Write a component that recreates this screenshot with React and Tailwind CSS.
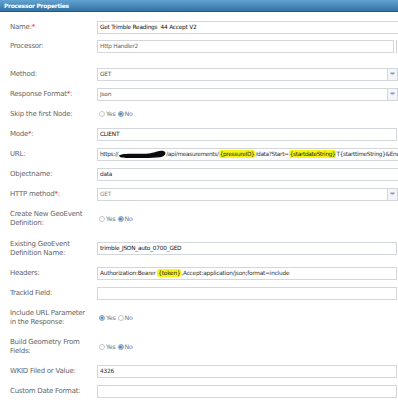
import React from 'react';

const font = { fontFamily: '"DejaVu Sans", Verdana, sans-serif' };

function Label({ children }) {
  return (
    <div className="w-[97px] shrink-0 pl-[10px] text-[7px] leading-[9px] tracking-[-0.25px] text-[#666]">
      {children}
    </div>
  );
}

function Req() {
  return <span className="text-[#e0242a]">*</span>;
}

function Field({ children, wide, dark, muted, edge, tight }) {
  return (
    <div className="flex items-center">
      <div
        className={`h-[13px] border border-[#d3d6db] bg-white flex items-center px-[2px] text-[5.8px] whitespace-nowrap overflow-hidden ${
          tight ? 'tracking-[-0.32px]' : 'tracking-[-0.22px]'
        } ${wide ? 'w-[306px]' : edge ? 'w-[297px]' : 'w-[300px]'} ${
          dark ? 'text-[#111]' : muted ? 'text-[#666]' : 'text-[#333]'
        }`}
      >
        {children}
      </div>
      {edge && <div className="ml-[2px] w-px h-[13px] bg-[#cfd2d6]" />}
    </div>
  );
}

function Select({ value, light }) {
  return (
    <div className="h-[13px] w-[301px] border border-[#d3d6db] bg-white flex items-center">
      <div className={`flex-1 px-[2px] text-[5.8px] tracking-[-0.2px] ${light ? 'text-[#888]' : 'text-[#555]'}`}>
        {value}
      </div>
      <div className="w-[10px] h-full border-l border-[#d3d6db] bg-[#f4f5f7] flex items-center justify-center">
        <svg width="5" height="4" viewBox="0 0 5 4">
          <rect x="0.5" y="0.5" width="4" height="1.6" fill="#7f9dbf" />
          <rect x="1.5" y="2.3" width="2" height="0.8" fill="#b7c6d8" />
        </svg>
      </div>
    </div>
  );
}

function Radio({ on }) {
  return on ? (
    <span className="w-[6px] h-[6px] rounded-full bg-[#a9c3dd] border border-[#8eaccb] flex items-center justify-center">
      <span className="w-[2.5px] h-[2.5px] rounded-full bg-[#5d86b3]" />
    </span>
  ) : (
    <span className="w-[6px] h-[6px] rounded-full bg-white border border-[#c4c7cb]" />
  );
}

function YesNo({ yes }) {
  return (
    <div className="flex items-center pl-[2px] text-[6.3px] tracking-[-0.2px] text-[#777]">
      <Radio on={yes} />
      <span className="ml-[1px] mr-[2px]">Yes</span>
      <Radio on={!yes} />
      <span className="ml-[1px]">No</span>
    </div>
  );
}

function Row({ h, children, className = '' }) {
  return <div className={`flex items-center ${h} ${className}`}>{children}</div>;
}

function Mark({ children }) {
  return <span className="bg-[#f7f516] rounded-[2px] px-[1px] text-[#222]">{children}</span>;
}

export default function App() {
  return (
    <div className="w-[398px] h-[400px] overflow-hidden bg-white" style={font}>
      {/* Header */}
      <div className="h-[12px] bg-gradient-to-b from-[#62a3d2] to-[#3373a4] border-b border-[#245a82] flex items-center pl-[4px]">
        <span className="text-white font-bold text-[6px] tracking-[-0.3px]">Processor Properties</span>
      </div>

      <div className="flex flex-col pt-[6px]">
        <Row h="h-[19px]">
          <Label>Name:<Req /></Label>
          <Field wide dark>Get Trimble Readings&nbsp; 44 Accept V2</Field>
        </Row>
        <Row h="h-[19px]">
          <Label>Processor:</Label>
          <Field edge muted>Http Handler2</Field>
        </Row>
        <Row h="h-[20px]" className="mt-[8px]">
          <Label>Method:</Label>
          <Select value="GET" />
        </Row>
        <Row h="h-[20px]">
          <Label>Response Format<Req />:</Label>
          <Select value="Json" />
        </Row>
        <Row h="h-[20px]">
          <Label>Skip the first Node:</Label>
          <YesNo yes={false} />
        </Row>
        <Row h="h-[20px]">
          <Label>Mode<Req />:</Label>
          <Field dark>CLIENT</Field>
        </Row>
        <Row h="h-[20px]">
          <Label>URL:</Label>
          <Field wide tight>
            <span>https://</span>
            <svg width="48" height="9" viewBox="0 0 48 9" className="shrink-0">
              <path
                d="M1 5.5 C4 3.5 12 3.6 22 3.8 C30 3.9 35 3 39 1.5 C43 0.2 46.5 0.5 47.3 2.5 C48 4.5 46 6.5 42 7.2 C34 8.3 22 7.8 12 7.9 C6 8 1.5 7.8 1 5.5 Z"
                fill="#0d0d0d"
              />
            </svg>
            <span>/api/measurements/</span>
            <Mark>{'{pressureID}'}</Mark>
            <span>/data?Start=</span>
            <Mark>{'{startdateString}'}</Mark>
            <span>T{'{starttimeString}'}&amp;Enc</span>
          </Field>
        </Row>
        <Row h="h-[20px]">
          <Label>Objectname:</Label>
          <Field wide>data</Field>
        </Row>
        <Row h="h-[20px]">
          <Label>HTTP method<Req />:</Label>
          <Select value="GET" light />
        </Row>
        <Row h="h-[30px]">
          <Label>Create New GeoEvent<br />Definition:</Label>
          <YesNo yes={false} />
        </Row>
        <Row h="h-[29px]">
          <Label>Existing GeoEvent<br />Definition Name:</Label>
          <Field dark>trimble_JSON_auto_0700_GED</Field>
        </Row>
        <Row h="h-[20px]">
          <Label>Headers:</Label>
          <Field>
            <span>Authorization:Bearer&nbsp;</span>
            <Mark>{'{token}'}</Mark>
            <span>,Accept:application/json;format=include</span>
          </Field>
        </Row>
        <Row h="h-[20px]">
          <Label>TrackId Field:</Label>
          <Field />
        </Row>
        <Row h="h-[30px]">
          <Label>Include URL Parameter<br />in the Response:</Label>
          <YesNo yes />
        </Row>
        <Row h="h-[28px]">
          <Label>Build Geometry From<br />Fields:</Label>
          <YesNo yes={false} />
        </Row>
        <Row h="h-[21px]">
          <Label>WKID Filed or Value:</Label>
          <Field>4326</Field>
        </Row>
        <Row h="h-[19px]">
          <Label>Custom Date Format:</Label>
          <Field />
        </Row>
      </div>
    </div>
  );
}
